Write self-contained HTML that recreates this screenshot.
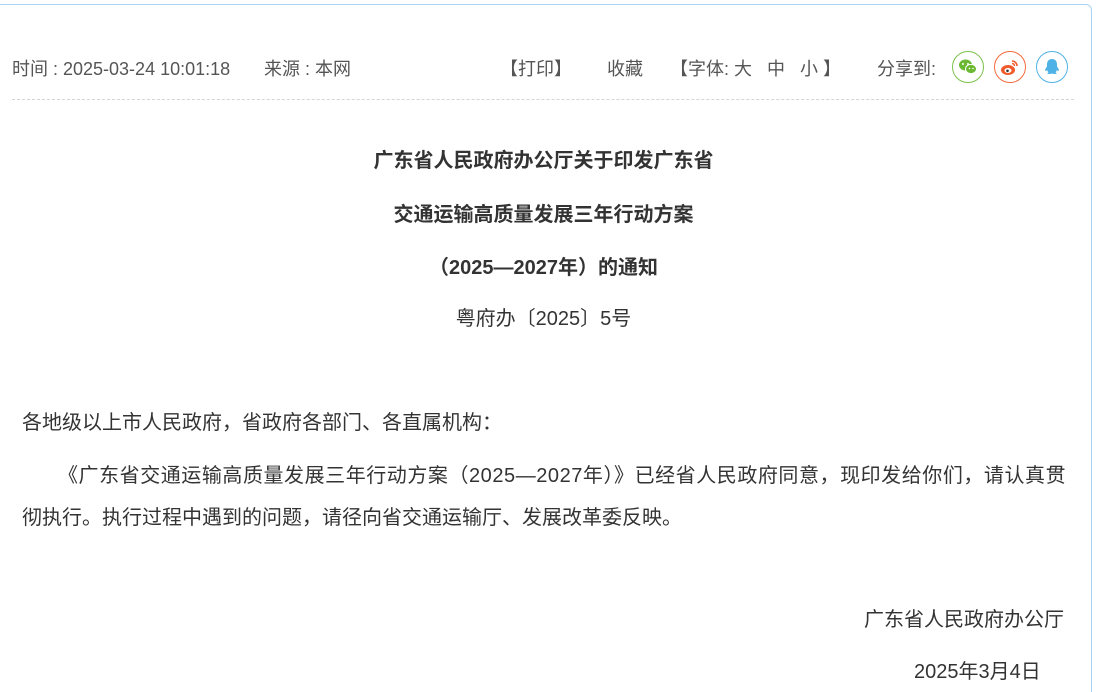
<!DOCTYPE html>
<html><head><meta charset="utf-8"><style>
html,body{margin:0;background:#fff;width:1097px;height:692px;overflow:hidden;font-family:"Liberation Sans","Noto Sans CJK SC",sans-serif;}
.box{position:absolute;left:-10px;top:4px;width:1102px;height:688px;border:1px solid #a8d4f4;border-bottom:none;border-radius:6px 6px 0 0;box-sizing:border-box;}
.t{position:absolute;white-space:nowrap;}
.meta{font-size:18px;color:#555;top:55px;}
.line{position:absolute;left:12px;top:99px;width:1062px;border-top:1px dashed #d5d5d5;}
.ic{position:absolute;top:51px;width:30px;height:30px;border-radius:50%;border:1px solid;}
.title{font-size:20px;font-weight:bold;color:#333;left:0;width:1087px;text-align:center;}
.body{font-size:20px;color:#333;}
</style></head><body>
<div class="box"></div>
<div class="t meta" style="left:12px">时间 : 2025-03-24 10:01:18</div>
<div class="t meta" style="left:264px">来源 : 本网</div>
<div class="t meta" style="left:500px">【打印】</div>
<div class="t meta" style="left:607px">收藏</div>
<div class="t meta" style="left:670px">【字体: 大&nbsp;&nbsp;&nbsp;中&nbsp;&nbsp;&nbsp;小 】</div>
<div class="t meta" style="left:877px">分享到:</div>
<div class="ic" style="left:952px;border-color:#7cc24a">
<svg width="30" height="30" viewBox="0 0 30 30"><ellipse cx="12.5" cy="13" rx="6.5" ry="5.5" fill="#6bb932"/><ellipse cx="18" cy="17" rx="5.5" ry="4.6" fill="#6bb932" stroke="#fff" stroke-width="1"/><circle cx="10" cy="12" r="1" fill="#fff"/><circle cx="15" cy="12" r="1" fill="#fff"/><circle cx="16.5" cy="16.5" r=".8" fill="#fff"/><circle cx="20" cy="16.5" r=".8" fill="#fff"/></svg></div>
<div class="ic" style="left:994px;border-color:#f26a3a">
<svg width="30" height="30" viewBox="0 0 30 30"><ellipse cx="13" cy="18" rx="7" ry="5" fill="#f05a2a"/><ellipse cx="13" cy="18.5" rx="3.5" ry="2.5" fill="#fff"/><circle cx="12.5" cy="18.8" r="1.3" fill="#333"/><path d="M17 9a5 5 0 0 1 5 5M17 11.5a2.5 2.5 0 0 1 2.5 2.5" stroke="#f05a2a" stroke-width="1.6" fill="none"/></svg></div>
<div class="ic" style="left:1036px;border-color:#4fb2e6">
<svg width="30" height="30" viewBox="0 0 30 30"><path d="M15 7c-3.5 0-5 2.5-5 5.5v2c-1.5 2-2.5 4-1.5 4.5.5.3 1.3-.6 1.6-1 .3 1 .8 1.8 1.5 2.3-1 .4-1.5 1-1 1.4 1 .5 3 .3 4.4-.2 1.4.5 3.4.7 4.4.2.5-.4 0-1-1-1.4.7-.5 1.2-1.3 1.5-2.3.3.4 1.1 1.3 1.6 1 1-.5 0-2.5-1.5-4.5v-2C20 9.5 18.5 7 15 7z" fill="#4fb2e6"/></svg></div>
<div class="line"></div>
<div class="t title" style="top:144px">广东省人民政府办公厅关于印发广东省</div>
<div class="t title" style="top:198px">交通运输高质量发展三年行动方案</div>
<div class="t title" style="top:251px">（2025—2027年）的通知</div>
<div class="t" style="top:302px;left:0;width:1087px;text-align:center;font-size:20px;color:#333">粤府办〔2025〕5号</div>
<div class="t body" style="left:22px;top:406px">各地级以上市人民政府，省政府各部门、各直属机构：</div>
<div class="t body" style="left:58px;top:459px;letter-spacing:0.55px">《广东省交通运输高质量发展三年行动方案（2025—2027年）》已经省人民政府同意，现印发给你们，请认真贯</div>
<div class="t body" style="left:22px;top:501px">彻执行。执行过程中遇到的问题，请径向省交通运输厅、发展改革委反映。</div>
<div class="t body" style="left:864px;top:603px">广东省人民政府办公厅</div>
<div class="t body" style="left:914px;top:655px">2025年3月4日</div>
</body></html>
